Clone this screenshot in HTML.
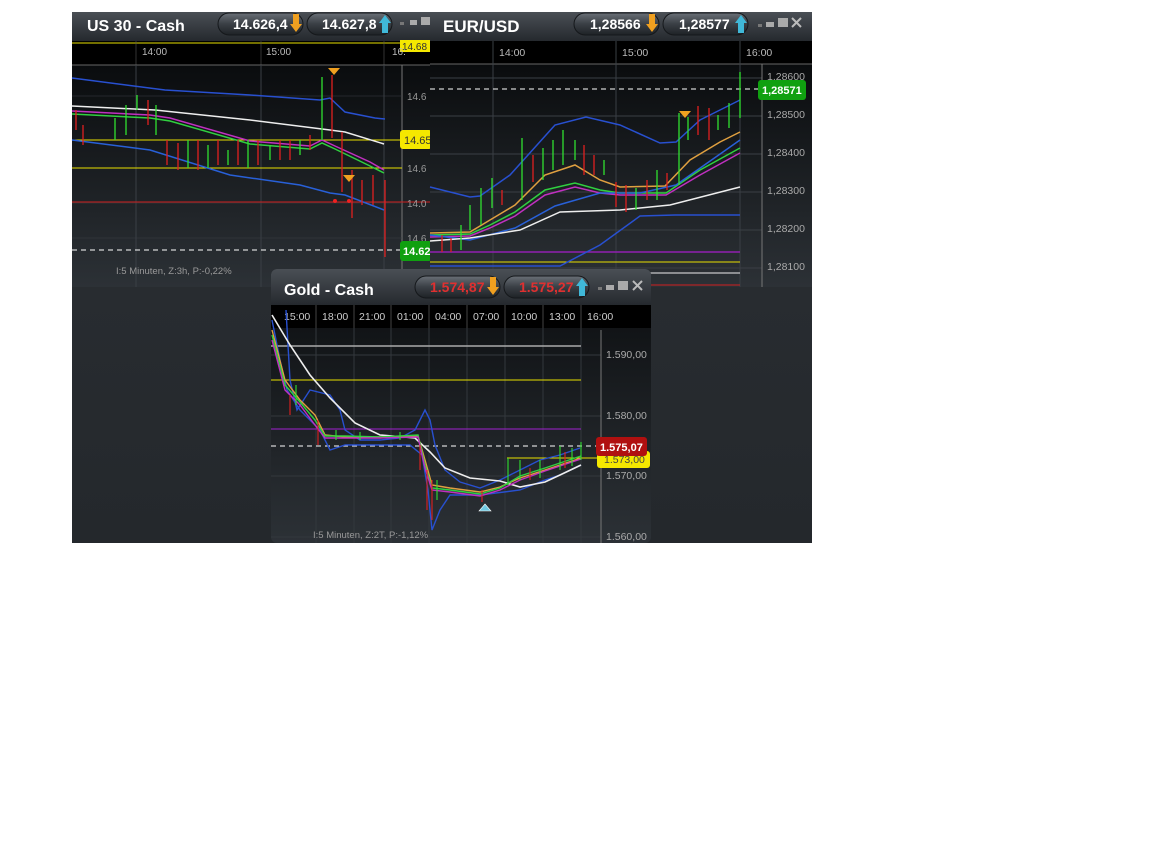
<!DOCTYPE html>
<html><head><meta charset="utf-8"><style>
html,body{margin:0;padding:0;background:#fff;width:1152px;height:864px;overflow:hidden}
svg{display:block;font-family:"Liberation Sans",sans-serif}
</style></head><body>
<svg width="1152" height="864" viewBox="0 0 1152 864" xmlns="http://www.w3.org/2000/svg">
<defs>
<linearGradient id="tb" x1="0" y1="0" x2="0" y2="1"><stop offset="0" stop-color="#4a4f55"/><stop offset="1" stop-color="#25292e"/></linearGradient>
<linearGradient id="ch" x1="0" y1="0" x2="0" y2="1"><stop offset="0" stop-color="#0a0c0e"/><stop offset="1" stop-color="#2c3136"/></linearGradient>
<linearGradient id="pill" x1="0" y1="0" x2="0" y2="1"><stop offset="0" stop-color="#6a7077"/><stop offset="0.5" stop-color="#3a3f45"/><stop offset="1" stop-color="#1e2226"/></linearGradient>
<linearGradient id="bg" x1="0" y1="0" x2="0" y2="1"><stop offset="0" stop-color="#2c3035"/><stop offset="1" stop-color="#24282c"/></linearGradient>
</defs>
<rect x="72" y="12" width="740" height="531" fill="url(#bg)"/>

<!-- US30 window -->
<g>
<rect x="72" y="12" width="360" height="29" fill="url(#tb)"/>
<text x="87" y="31" fill="#fff" font-size="16" font-weight="bold">US 30 - Cash</text>
<rect x="218" y="13" width="85" height="22" rx="11" fill="url(#pill)" stroke="#15181b"/>
<text x="233" y="29" fill="#fff" font-size="14" font-weight="bold">14.626,4</text>
<path d="M293 14 l6 0 0 10 3 0 -6 8 -6 -8 3 0z" fill="#f0a020"/>
<rect x="307" y="13" width="85" height="22" rx="11" fill="url(#pill)" stroke="#15181b"/>
<text x="322" y="29" fill="#fff" font-size="14" font-weight="bold">14.627,8</text>
<path d="M382 33 l6 0 0 -10 3 0 -6 -8 -6 8 3 0z" fill="#40b8d8"/>
<rect x="400" y="22" width="4" height="3" fill="#777"/><rect x="410" y="20" width="7" height="5" fill="#aaa"/><rect x="421" y="17" width="9" height="8" fill="#aaa"/>
<rect x="72" y="41" width="360" height="24" fill="#000"/>
<line x1="72" y1="43" x2="430" y2="43" stroke="#e8e000"/>
<rect x="400" y="40" width="30" height="12" fill="#f5e800"/><text x="402" y="50" font-size="10" fill="#333">14.68</text>
<text x="142" y="55" fill="#bbb" font-size="10">14:00</text><text x="266" y="55" fill="#bbb" font-size="10">15:00</text><text x="392" y="55" fill="#bbb" font-size="10">16:</text>
<line x1="136" y1="41" x2="136" y2="287" stroke="#555" stroke-width="0.6"/><line x1="261" y1="41" x2="261" y2="287" stroke="#555" stroke-width="0.6"/><line x1="384" y1="41" x2="384" y2="287" stroke="#555" stroke-width="0.6"/>
<rect x="72" y="65" width="360" height="222" fill="url(#ch)"/>
<line x1="72" y1="65" x2="430" y2="65" stroke="#666"/>
<line x1="136" y1="65" x2="136" y2="287" stroke="#3a3f45"/><line x1="261" y1="65" x2="261" y2="287" stroke="#3a3f45"/><line x1="384" y1="65" x2="384" y2="287" stroke="#3a3f45"/>
<line x1="402" y1="65" x2="402" y2="287" stroke="#777"/>
<g stroke="#3a3f45" stroke-width="0.6"><line x1="72" y1="96" x2="402" y2="96"/><line x1="72" y1="203" x2="402" y2="203"/><line x1="72" y1="238" x2="402" y2="238"/></g>
<line x1="72" y1="140" x2="402" y2="140" stroke="#e8e000"/>
<line x1="72" y1="168" x2="402" y2="168" stroke="#e8e000"/>
<line x1="72" y1="202" x2="430" y2="202" stroke="#d02020"/>
<line x1="72" y1="250" x2="400" y2="250" stroke="#fff" stroke-dasharray="5,4"/>
<g fill="none" stroke-width="1.5">
<polyline stroke="#2850d0" points="72,78 165,90 250,95 320,100 330,98 345,112 375,118 385,119"/>
<polyline stroke="#eee" points="72,106 155,110 250,120 330,130 345,132 384,144"/>
<polyline stroke="#c030c0" points="72,111 150,115 170,118 250,141 310,146 322,140 335,146 370,162 384,170"/>
<polyline stroke="#30d040" points="72,114 150,118 170,121 250,144 310,149 322,143 335,149 370,166 384,173"/>
<polyline stroke="#2860d8" points="72,140 150,150 230,175 300,185 330,193 345,195 384,210"/>
</g>
<g stroke-width="1.3">
<g stroke="#30e030"><line x1="115" y1="118" x2="115" y2="140"/><line x1="126" y1="105" x2="126" y2="135"/><line x1="137" y1="95" x2="137" y2="110"/><line x1="156" y1="105" x2="156" y2="135"/><line x1="188" y1="140" x2="188" y2="168"/><line x1="208" y1="145" x2="208" y2="168"/><line x1="228" y1="150" x2="228" y2="165"/><line x1="248" y1="140" x2="248" y2="168"/><line x1="270" y1="145" x2="270" y2="160"/><line x1="300" y1="140" x2="300" y2="155"/><line x1="322" y1="77" x2="322" y2="140"/></g>
<g stroke="#e02020"><line x1="76" y1="110" x2="76" y2="130"/><line x1="83" y1="125" x2="83" y2="145"/><line x1="148" y1="100" x2="148" y2="125"/><line x1="167" y1="140" x2="167" y2="165"/><line x1="178" y1="143" x2="178" y2="170"/><line x1="198" y1="140" x2="198" y2="170"/><line x1="218" y1="140" x2="218" y2="165"/><line x1="238" y1="140" x2="238" y2="165"/><line x1="258" y1="140" x2="258" y2="165"/><line x1="280" y1="140" x2="280" y2="160"/><line x1="290" y1="140" x2="290" y2="160"/><line x1="310" y1="135" x2="310" y2="150"/><line x1="332" y1="75" x2="332" y2="138"/><line x1="342" y1="132" x2="342" y2="192"/><line x1="352" y1="170" x2="352" y2="218"/><line x1="362" y1="180" x2="362" y2="205"/><line x1="373" y1="175" x2="373" y2="205"/><line x1="385" y1="180" x2="385" y2="257"/></g>
</g>
<path d="M328 68 l12 0 -6 7z M343 175 l12 0 -6 7z" fill="#f0a020"/>
<circle cx="335" cy="201" r="2" fill="#f02020"/><circle cx="349" cy="201" r="2" fill="#f02020"/>
<g fill="#999" font-size="10"><text x="407" y="100">14.6</text><text x="407" y="172">14.6</text><text x="407" y="207">14.0</text><text x="407" y="242">14.6</text></g>
<rect x="400" y="130" width="32" height="19" rx="3" fill="#f5e800"/><text x="404" y="144" font-size="11" fill="#333">14.65</text>
<rect x="400" y="241" width="32" height="20" rx="3" fill="#10a010"/><text x="403" y="255" font-size="11" font-weight="bold" fill="#fff">14.62</text>
<text x="116" y="274" fill="#999" font-size="9.5">I:5 Minuten, Z:3h, P:-0,22%</text>
</g>

<!-- EUR/USD window -->
<g>
<rect x="430" y="12" width="382" height="29" fill="url(#tb)"/>
<text x="443" y="32" fill="#fff" font-size="17" font-weight="bold">EUR/USD</text>
<rect x="574" y="13" width="85" height="22" rx="11" fill="url(#pill)" stroke="#15181b"/>
<text x="590" y="29" fill="#fff" font-size="14" font-weight="bold">1,28566</text>
<path d="M649 14 l6 0 0 10 3 0 -6 8 -6 -8 3 0z" fill="#f0a020"/>
<rect x="663" y="13" width="85" height="22" rx="11" fill="url(#pill)" stroke="#15181b"/>
<text x="679" y="29" fill="#fff" font-size="14" font-weight="bold">1,28577</text>
<path d="M738 33 l6 0 0 -10 3 0 -6 -8 -6 8 3 0z" fill="#40b8d8"/>
<rect x="758" y="24" width="4" height="3" fill="#777"/><rect x="766" y="22" width="8" height="5" fill="#aaa"/><rect x="778" y="18" width="10" height="9" fill="#aaa"/>
<path d="M792 18 l9 9 M801 18 l-9 9" stroke="#bbb" stroke-width="2"/>
<rect x="430" y="41" width="382" height="23" fill="#000"/>
<text x="499" y="56" fill="#bbb" font-size="10.5">14:00</text><text x="622" y="56" fill="#bbb" font-size="10.5">15:00</text><text x="746" y="56" fill="#bbb" font-size="10.5">16:00</text>
<rect x="430" y="64" width="382" height="223" fill="url(#ch)"/>
<line x1="430" y1="64" x2="812" y2="64" stroke="#666"/>
<g stroke="#3a3f45"><line x1="493" y1="41" x2="493" y2="287"/><line x1="616" y1="41" x2="616" y2="287"/><line x1="740" y1="41" x2="740" y2="287"/>
<line x1="430" y1="78" x2="762" y2="78"/><line x1="430" y1="116" x2="762" y2="116"/><line x1="430" y1="154" x2="762" y2="154"/><line x1="430" y1="192" x2="762" y2="192"/><line x1="430" y1="230" x2="762" y2="230"/><line x1="430" y1="268" x2="762" y2="268"/></g>
<line x1="762" y1="64" x2="762" y2="287" stroke="#777"/>
<line x1="430" y1="89" x2="758" y2="89" stroke="#fff" stroke-dasharray="5,4"/>
<line x1="430" y1="252" x2="740" y2="252" stroke="#9020b0" stroke-width="1.5"/>
<line x1="430" y1="262" x2="740" y2="262" stroke="#e8e000"/>
<line x1="430" y1="273" x2="740" y2="273" stroke="#eee"/>
<line x1="430" y1="285" x2="740" y2="285" stroke="#d02020"/>
<g fill="none" stroke-width="1.5">
<polyline stroke="#2850d0" points="430,187 470,197 480,196 510,175 555,125 586,117 620,125 660,143 676,142 700,120 720,110 740,100"/>
<polyline stroke="#2850d0" points="430,266 560,266 600,245 640,216 675,215 720,215 740,215"/>
<polyline stroke="#e0a040" points="430,233 470,232 490,220 515,205 545,175 575,165 600,180 620,187 665,186 690,160 720,142 740,132"/>
<polyline stroke="#30d040" points="430,235 470,234 490,225 515,212 545,190 575,183 600,190 620,193 666,193 700,170 740,148"/>
<polyline stroke="#c030c0" points="430,237 470,236 490,228 515,216 545,195 575,187 600,193 620,195 666,195 700,175 740,153"/>
<polyline stroke="#2860d8" points="430,235 470,240 515,228 555,206 600,193 640,193 676,185 740,140"/>
<polyline stroke="#eee" points="430,241 470,238 520,230 560,212 620,210 670,205 740,187"/>
</g>
<g stroke-width="1.3">
<g stroke="#30e030"><line x1="461" y1="225" x2="461" y2="250"/><line x1="470" y1="205" x2="470" y2="230"/><line x1="481" y1="188" x2="481" y2="225"/><line x1="492" y1="178" x2="492" y2="208"/><line x1="522" y1="138" x2="522" y2="200"/><line x1="543" y1="148" x2="543" y2="180"/><line x1="553" y1="140" x2="553" y2="170"/><line x1="563" y1="130" x2="563" y2="165"/><line x1="575" y1="140" x2="575" y2="160"/><line x1="604" y1="160" x2="604" y2="175"/><line x1="636" y1="188" x2="636" y2="210"/><line x1="657" y1="170" x2="657" y2="200"/><line x1="679" y1="113" x2="679" y2="185"/><line x1="688" y1="117" x2="688" y2="140"/><line x1="718" y1="115" x2="718" y2="130"/><line x1="729" y1="103" x2="729" y2="128"/><line x1="740" y1="72" x2="740" y2="118"/></g>
<g stroke="#e02020"><line x1="442" y1="235" x2="442" y2="252"/><line x1="451" y1="238" x2="451" y2="252"/><line x1="502" y1="190" x2="502" y2="205"/><line x1="533" y1="155" x2="533" y2="182"/><line x1="584" y1="145" x2="584" y2="175"/><line x1="594" y1="155" x2="594" y2="175"/><line x1="616" y1="182" x2="616" y2="207"/><line x1="626" y1="185" x2="626" y2="212"/><line x1="647" y1="180" x2="647" y2="200"/><line x1="667" y1="173" x2="667" y2="190"/><line x1="698" y1="106" x2="698" y2="135"/><line x1="709" y1="108" x2="709" y2="140"/></g>
</g>
<path d="M679 111 l12 0 -6 7z" fill="#f0a020"/>
<g fill="#aaa" font-size="10.5"><text x="767" y="80">1,28600</text><text x="767" y="118">1,28500</text><text x="767" y="156">1,28400</text><text x="767" y="194">1,28300</text><text x="767" y="232">1,28200</text><text x="767" y="270">1,28100</text></g>
<rect x="758" y="80" width="48" height="20" rx="3" fill="#10a010"/><text x="762" y="94" font-size="11" font-weight="bold" fill="#fff">1,28571</text>
</g>

<!-- Gold window -->
<g>
<rect x="271" y="269" width="380" height="274" rx="6" fill="url(#ch)"/>
<path d="M271 305 v-30 a6 6 0 0 1 6 -6 h368 a6 6 0 0 1 6 6 v30z" fill="url(#tb)"/>
<text x="284" y="295" fill="#fff" font-size="16" font-weight="bold">Gold - Cash</text>
<rect x="415" y="276" width="85" height="22" rx="11" fill="url(#pill)" stroke="#15181b"/>
<text x="430" y="292" fill="#e03030" font-size="14" font-weight="bold">1.574,87</text>
<path d="M490 277 l6 0 0 10 3 0 -6 8 -6 -8 3 0z" fill="#f0a020"/>
<rect x="504" y="276" width="85" height="22" rx="11" fill="url(#pill)" stroke="#15181b"/>
<text x="519" y="292" fill="#e03030" font-size="14" font-weight="bold">1.575,27</text>
<path d="M579 296 l6 0 0 -10 3 0 -6 -8 -6 8 3 0z" fill="#40b8d8"/>
<rect x="598" y="287" width="4" height="3" fill="#777"/><rect x="606" y="285" width="8" height="5" fill="#aaa"/><rect x="618" y="281" width="10" height="9" fill="#aaa"/>
<path d="M633 281 l9 9 M642 281 l-9 9" stroke="#bbb" stroke-width="2"/>
<rect x="271" y="305" width="380" height="23" fill="#000"/>
<g stroke="#444"><line x1="316" y1="305" x2="316" y2="328"/><line x1="354" y1="305" x2="354" y2="328"/><line x1="391" y1="305" x2="391" y2="328"/><line x1="429" y1="305" x2="429" y2="328"/><line x1="467" y1="305" x2="467" y2="328"/><line x1="505" y1="305" x2="505" y2="328"/><line x1="543" y1="305" x2="543" y2="328"/><line x1="581" y1="305" x2="581" y2="328"/></g>
<g fill="#ccc" font-size="10.5"><text x="284" y="320">15:00</text><text x="322" y="320">18:00</text><text x="359" y="320">21:00</text><text x="397" y="320">01:00</text><text x="435" y="320">04:00</text><text x="473" y="320">07:00</text><text x="511" y="320">10:00</text><text x="549" y="320">13:00</text><text x="587" y="320">16:00</text></g>
<g stroke="#33383d"><line x1="316" y1="328" x2="316" y2="543"/><line x1="354" y1="328" x2="354" y2="543"/><line x1="391" y1="328" x2="391" y2="543"/><line x1="429" y1="328" x2="429" y2="543"/><line x1="467" y1="328" x2="467" y2="543"/><line x1="505" y1="328" x2="505" y2="543"/><line x1="543" y1="328" x2="543" y2="543"/><line x1="581" y1="328" x2="581" y2="543"/>
<line x1="271" y1="355" x2="601" y2="355"/><line x1="271" y1="416" x2="601" y2="416"/><line x1="271" y1="476" x2="601" y2="476"/><line x1="271" y1="537" x2="601" y2="537"/></g>
<line x1="601" y1="330" x2="601" y2="543" stroke="#777"/>
<line x1="271" y1="346" x2="581" y2="346" stroke="#aaa" stroke-width="1.5"/>
<line x1="271" y1="380" x2="581" y2="380" stroke="#e8e000"/>
<line x1="271" y1="429" x2="581" y2="429" stroke="#a020d0"/>
<line x1="271" y1="446" x2="597" y2="446" stroke="#fff" stroke-dasharray="5,4"/>
<line x1="507" y1="458" x2="598" y2="458" stroke="#e8e000"/>
<g fill="none" stroke-width="1.4">
<polyline stroke="#2850d0" points="286,310 290,380 297,410 310,390 330,395 340,410 345,430 360,440 380,440 400,438 415,430 425,410 430,420 435,445 445,470 460,482 480,488 500,480 520,470 540,460 560,455 580,448"/>
<polyline stroke="#2850d0" points="272,320 280,360 287,390 300,410 320,430 330,450 345,445 380,445 410,445 422,455 428,490 432,530 440,510 450,495 480,495 520,490 545,480 560,475 581,465"/>
<polyline stroke="#eee" stroke-width="1.6" points="272,315 290,345 310,375 330,398 355,423 380,435 415,438 430,452 445,468 470,478 500,481 520,487 545,482 560,475 581,465"/>
<polyline stroke="#e0a040" points="272,330 285,380 300,400 315,415 325,435 345,437 380,437 418,436 425,460 432,485 450,488 480,492 500,487 520,478 545,470 581,458"/>
<polyline stroke="#30d040" points="272,335 285,385 300,402 315,420 325,436 345,436 380,437 418,435 425,465 432,488 450,490 480,494 500,488 520,476 545,468 581,456"/>
<polyline stroke="#c030c0" points="272,340 285,390 300,405 315,425 325,438 345,438 380,438 418,437 425,468 432,490 450,492 480,496 500,490 520,480 545,471 581,459"/>
</g>
<g stroke-width="1.1">
<g stroke="#e02020"><line x1="290" y1="395" x2="290" y2="415"/><line x1="318" y1="420" x2="318" y2="445"/><line x1="420" y1="445" x2="420" y2="470"/><line x1="427" y1="470" x2="427" y2="510"/><line x1="432" y1="480" x2="432" y2="520"/><line x1="482" y1="490" x2="482" y2="502"/><line x1="530" y1="468" x2="530" y2="480"/><line x1="565" y1="452" x2="565" y2="468"/></g>
<g stroke="#30e030"><line x1="296" y1="385" x2="296" y2="405"/><line x1="336" y1="430" x2="336" y2="440"/><line x1="360" y1="432" x2="360" y2="440"/><line x1="400" y1="432" x2="400" y2="440"/><line x1="437" y1="480" x2="437" y2="500"/><line x1="508" y1="458" x2="508" y2="485"/><line x1="520" y1="460" x2="520" y2="480"/><line x1="540" y1="460" x2="540" y2="478"/><line x1="560" y1="446" x2="560" y2="470"/><line x1="572" y1="448" x2="572" y2="466"/><line x1="581" y1="442" x2="581" y2="460"/></g>
</g>
<path d="M479 511 l12 0 -6 -7z" fill="#70c8e0" stroke="#fff" stroke-width="0.6"/>
<g fill="#aaa" font-size="10.5"><text x="606" y="358">1.590,00</text><text x="606" y="419">1.580,00</text><text x="606" y="479">1.570,00</text><text x="606" y="540">1.560,00</text></g>
<rect x="597" y="451" width="53" height="17" rx="3" fill="#f5e800"/><text x="604" y="463" font-size="10.5" fill="#444">1.573,00</text>
<rect x="596" y="437" width="51" height="19" rx="3" fill="#b01010"/><text x="600" y="451" font-size="11" font-weight="bold" fill="#fff">1.575,07</text>
<text x="313" y="538" fill="#999" font-size="9.5">I:5 Minuten, Z:2T, P:-1,12%</text>
</g>
</svg>
</body></html>
